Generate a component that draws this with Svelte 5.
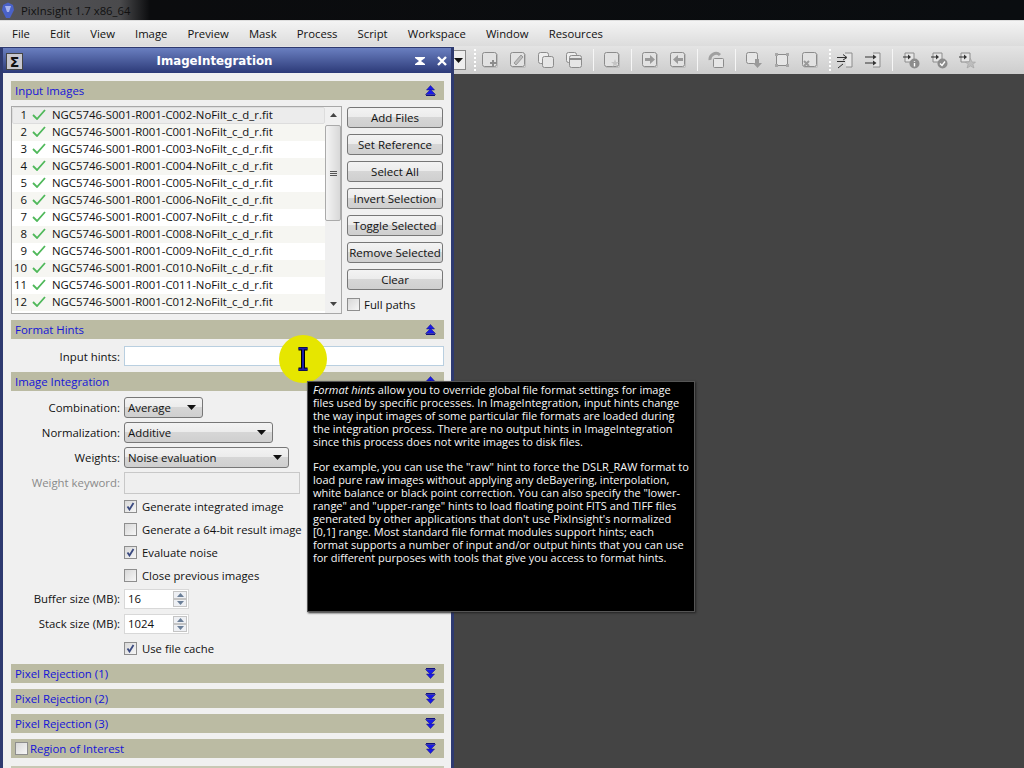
<script>
  const menus = ['File', 'Edit', 'View', 'Image', 'Preview', 'Mask', 'Process', 'Script', 'Workspace', 'Window', 'Resources'];
  const files = ['C002', 'C001', 'C003', 'C004', 'C005', 'C006', 'C007', 'C008', 'C009', 'C010', 'C011', 'C012'];
  const buttons = ['Add Files', 'Set Reference', 'Select All', 'Invert Selection', 'Toggle Selected', 'Remove Selected', 'Clear'];
  const collapsed = ['Pixel Rejection (1)', 'Pixel Rejection (2)', 'Pixel Rejection (3)'];
</script>

{#snippet chevrons(up)}
  <svg class="chev" width="11" height="11" viewBox="0 0 11 11">
    {#if up}
      <path d="M5.5 0.5 L9.5 5 H1.5 Z" fill="#1a1ae8" stroke="#101080" stroke-width=".5" />
      <path d="M5.5 4.5 L10.5 9.5 H0.5 Z" fill="#1a1ae8" stroke="#101080" stroke-width=".5" />
      <path d="M1 10.5 H10" stroke="#101080" />
    {:else}
      <path d="M1 0.5 H10" stroke="#101080" />
      <path d="M0.5 1.5 H10.5 L5.5 6.5 Z" fill="#1a1ae8" stroke="#101080" stroke-width=".5" />
      <path d="M1.5 6 H9.5 L5.5 10.5 Z" fill="#1a1ae8" stroke="#101080" stroke-width=".5" />
    {/if}
  </svg>
{/snippet}

{#snippet check(on)}
  <span class="box">
    {#if on}
      <svg width="9" height="9" viewBox="0 0 9 9"><path d="M1.5 4.5 L3.5 7.5 L7.5 1" fill="none" stroke="#3a4a80" stroke-width="1.8" /></svg>
    {/if}
  </span>
{/snippet}

{#snippet arrow()}
  <svg width="9" height="5" viewBox="0 0 9 5"><path d="M0 0 H9 L4.5 5 Z" fill="#111" /></svg>
{/snippet}

{#snippet spin(value)}
  <span class="spin">
    <span class="spin-val">{value}</span>
    <span class="spin-btns">
      <span><svg width="7" height="4" viewBox="0 0 7 4"><path d="M3.5 0 L7 4 H0 Z" fill="#6b7f98" /></svg></span>
      <span><svg width="7" height="4" viewBox="0 0 7 4"><path d="M0 0 H7 L3.5 4 Z" fill="#6b7f98" /></svg></span>
    </span>
  </span>
{/snippet}

{#snippet page()}
  <rect x="1.5" y="1.5" width="14" height="14" rx="2" fill="#e2e2e2" stroke="#8c8c8c" />
  <path d="M3 16.5 H15.5 Q16.5 16.5 16.5 15.5 V3" fill="none" stroke="#bdbdbd" />
{/snippet}

<div class="app">
  <header class="titlebar">
    <svg width="14" height="17" viewBox="0 0 14 17">
      <path d="M2 3 L7 0.5 L12 3 L13 8 L9 16 H5 L1 8 Z" fill="#4a62c8" />
      <path d="M4 4 H10 L8 10 H6 Z" fill="#a8b4ec" />
    </svg>
    <span class="apptitle">PixInsight 1.7 x86_64</span>
  </header>

  <nav class="menubar">
    {#each menus as m}
      <span class="menu">{m}</span>
    {/each}
  </nav>

  <div class="toolbar">
    <span class="combo-end">{@render arrow()}</span>
    <i class="sep dotted"></i>
    <svg class="tool" width="18" height="18" viewBox="0 0 18 18">{@render page()}<path d="M12 9 V15 M9 12 H15" stroke="#8c8c8c" stroke-width="2" /></svg>
    <svg class="tool" width="18" height="18" viewBox="0 0 18 18">{@render page()}<path d="M5 12 L12 4 L14 6 L7 14 Z" fill="#bdbdbd" stroke="#9a9a9a" /></svg>
    <svg class="tool" width="18" height="18" viewBox="0 0 18 18"><rect x="1.5" y="1.5" width="10" height="11" rx="2" fill="#eee" stroke="#8c8c8c" /><rect x="5.5" y="5.5" width="11" height="11" rx="2" fill="#e6e6e6" stroke="#8c8c8c" /></svg>
    <svg class="tool" width="18" height="18" viewBox="0 0 18 18"><rect x="1.5" y="1.5" width="10" height="10" rx="2" fill="#eee" stroke="#8c8c8c" /><rect x="4.5" y="4.5" width="12" height="12" rx="2" fill="#e6e6e6" stroke="#8c8c8c" /><path d="M5 8 H16" stroke="#8c8c8c" stroke-width="2" /></svg>
    <i class="sep"></i>
    <svg class="tool" width="18" height="18" viewBox="0 0 18 18">{@render page()}<path d="M12 8 L13 11 H16 L13.5 13 L14.5 16 L12 14 L9.5 16 L10.5 13 L8 11 H11 Z" fill="#c4c4c4" /></svg>
    <i class="sep"></i>
    <svg class="tool" width="18" height="18" viewBox="0 0 18 18">{@render page()}<path d="M4 7 H9 V4 L14 8.5 L9 13 V10 H4 Z" fill="#9a9a9a" /></svg>
    <svg class="tool" width="18" height="18" viewBox="0 0 18 18">{@render page()}<path d="M14 7 H9 V4 L4 8.5 L9 13 V10 H14 Z" fill="#9a9a9a" /></svg>
    <i class="sep"></i>
    <svg class="tool" width="18" height="18" viewBox="0 0 18 18"><path d="M3 9 A6 6 0 0 1 13 4" fill="none" stroke="#a0a0a0" stroke-width="3" /><rect x="6.5" y="7.5" width="10" height="9" rx="1" fill="#e6e6e6" stroke="#8c8c8c" /></svg>
    <i class="sep"></i>
    <svg class="tool" width="18" height="18" viewBox="0 0 18 18"><rect x="1.5" y="1.5" width="11" height="11" rx="2" fill="#e6e6e6" stroke="#8c8c8c" /><path d="M10 8 H14 V12 H17 L12.5 17 L8 12 H10 Z" fill="#9a9a9a" /></svg>
    <svg class="tool" width="18" height="18" viewBox="0 0 18 18"><rect x="3.5" y="3.5" width="11" height="11" fill="#e6e6e6" stroke="#8c8c8c" /><path d="M2 2 H5 V5 H2 Z M13 2 H16 V5 H13 Z M2 13 H5 V16 H2 Z M13 13 H16 V16 H13 Z" fill="#a8a8a8" /></svg>
    <svg class="tool" width="18" height="18" viewBox="0 0 18 18">{@render page()}<path d="M3 10 L8 15 M8 10 L3 15" stroke="#9a9a9a" stroke-width="2" /></svg>
    <i class="sep dotted"></i>
    <svg class="tool" width="18" height="18" viewBox="0 0 18 18"><path d="M9 2 H16 V16 H10" fill="#e6e6e6" stroke="#8c8c8c" /><path d="M1 6.5 H10 M1 10.5 H9 M7 3.5 L11 6.5 L7 9 M7 13 L2 17" fill="none" stroke="#333" /></svg>
    <svg class="tool" width="18" height="18" viewBox="0 0 18 18"><path d="M9 2 H16 V16 H9" fill="#e6e6e6" stroke="#8c8c8c" /><path d="M1 6 H10 M1 12 H10" stroke="#333" /><path d="M9 3.5 L12.5 6 L9 8.5 Z M9 9.5 L12.5 12 L9 14.5 Z" fill="#333" /></svg>
    <i class="sep"></i>
    <svg class="tool" width="18" height="18" viewBox="0 0 18 18"><path d="M3 2 H12 V11 H3 Z" fill="#e6e6e6" stroke="#8c8c8c" /><path d="M1 6 H7" stroke="#333" /><path d="M6 3.5 L9 6 L6 8.5 Z" fill="#333" /><circle cx="12.5" cy="12.5" r="5" fill="#8c8c8c" /><path d="M12.5 10 V10.8 M12.5 12 V15.5" stroke="#fff" stroke-width="1.4" /></svg>
    <svg class="tool" width="18" height="18" viewBox="0 0 18 18"><path d="M3 2 H12 V11 H3 Z" fill="#e6e6e6" stroke="#8c8c8c" /><path d="M1 6 H7" stroke="#333" /><path d="M6 3.5 L9 6 L6 8.5 Z" fill="#333" /><circle cx="12.5" cy="12.5" r="5" fill="#8c8c8c" /><path d="M10 12.5 L12 14.5 L15 10.5" fill="none" stroke="#fff" stroke-width="1.4" /></svg>
    <svg class="tool" width="18" height="18" viewBox="0 0 18 18"><path d="M3 2 H12 V11 H3 Z" fill="#e6e6e6" stroke="#8c8c8c" /><path d="M1 6 H7" stroke="#333" /><path d="M6 3.5 L9 6 L6 8.5 Z" fill="#333" /><path d="M12.5 7.5 L14 11 H17.5 L15 13.5 L16 17 L12.5 15 L9 17 L10 13.5 L7.5 11 H11 Z" fill="#bdbdbd" stroke="#999" stroke-width=".5" /></svg>
  </div>

  <main class="workspace"></main>

  <section class="window">
    <div class="win-title">
      <span class="sigma">Σ</span>
      <span class="win-name">ImageIntegration</span>
      <svg class="win-shade" width="10" height="8" viewBox="0 0 10 8"><path d="M0 0 H10 V1 L6 4 L10 7 V8 H0 V7 L4 4 L0 1 Z" fill="#fff" /></svg>
      <svg class="win-close" width="10" height="10" viewBox="0 0 10 10"><path d="M1 1 L9 9 M9 1 L1 9" stroke="#fff" stroke-width="2.4" /></svg>
    </div>

    <div class="win-body">
      <div class="band"><span>Input Images</span>{@render chevrons(true)}</div>
      <div class="input-images">
        <div class="listbox">
          <div class="rows">
            {#each files as f, i}
              <div class="row" class:alt={i % 2 === 1} class:current={i === 0}>
                <span class="num">{i + 1}</span>
                <svg class="tick" width="14" height="11" viewBox="0 0 14 11"><path d="M1 6 L5 10 L13 1" fill="none" stroke="#4fb85a" stroke-width="1.8" /></svg>
                <span>NGC5746-S001-R001-{f}-NoFilt_c_d_r.fit</span>
              </div>
            {/each}
          </div>
          <div class="scrollbar">
            <svg class="sb-up" width="7" height="4" viewBox="0 0 7 4"><path d="M3.5 0 L7 4 H0 Z" fill="#444" /></svg>
            <div class="thumb"><i></i><i></i><i></i></div>
            <svg class="sb-down" width="7" height="4" viewBox="0 0 7 4"><path d="M0 0 H7 L3.5 4 Z" fill="#444" /></svg>
          </div>
        </div>
        <div class="side">
          {#each buttons as b}
            <div class="btn">{b}</div>
          {/each}
          <label class="full">{@render check(false)}<span>Full paths</span></label>
        </div>
      </div>

      <div class="band"><span>Format Hints</span>{@render chevrons(true)}</div>
      <div class="hints">
        <span class="lbl">Input hints:</span>
        <div class="field wide"></div>
      </div>

      <div class="band"><span>Image Integration</span>{@render chevrons(true)}</div>
      <div class="form">
        <div class="frow first"><span class="lbl">Combination:</span><div class="select s-comb">Average{@render arrow()}</div></div>
        <div class="frow"><span class="lbl">Normalization:</span><div class="select s-norm">Additive{@render arrow()}</div></div>
        <div class="frow"><span class="lbl">Weights:</span><div class="select s-weight">Noise evaluation{@render arrow()}</div></div>
        <div class="frow"><span class="lbl dim">Weight keyword:</span><div class="field s-key"></div></div>
        <div class="frow after-key"><span class="lbl"></span>{@render check(true)}<span class="ck">Generate integrated image</span></div>
        <div class="frow tight"><span class="lbl"></span>{@render check(false)}<span class="ck">Generate a 64-bit result image</span></div>
        <div class="frow tight"><span class="lbl"></span>{@render check(true)}<span class="ck">Evaluate noise</span></div>
        <div class="frow tight"><span class="lbl"></span>{@render check(false)}<span class="ck">Close previous images</span></div>
        <div class="frow tight"><span class="lbl">Buffer size (MB):</span>{@render spin('16')}</div>
        <div class="frow"><span class="lbl">Stack size (MB):</span>{@render spin('1024')}</div>
        <div class="frow"><span class="lbl"></span>{@render check(true)}<span class="ck">Use file cache</span></div>
      </div>

      {#each collapsed as c}
        <div class="band closed"><span>{c}</span>{@render chevrons(false)}</div>
      {/each}
      <div class="band closed"><span class="roi">{@render check(false)}Region of Interest</span>{@render chevrons(false)}</div>
      <div class="band last"></div>
    </div>
  </section>

  <div class="spot">
    <svg width="12" height="24" viewBox="0 0 12 24">
      <path d="M1.5 1.5 H10.5 M1.5 22.5 H10.5 M6 1.5 V22.5" fill="none" stroke="#000" stroke-width="4" />
      <path d="M1.5 1.5 H10.5 M1.5 22.5 H10.5 M6 1.5 V22.5" fill="none" stroke="#1c1ca8" stroke-width="2" />
    </svg>
  </div>

  <aside class="tip">
    <p><em>Format hints</em> allow you to override global file format settings for image<br />files used by specific processes. In ImageIntegration, input hints change<br />the way input images of some particular file formats are loaded during<br />the integration process. There are no output hints in ImageIntegration<br />since this process does not write images to disk files.</p>
    <p>For example, you can use the "raw" hint to force the DSLR_RAW format to<br />load pure raw images without applying any deBayering, interpolation,<br />white balance or black point correction. You can also specify the "lower-<br />range" and "upper-range" hints to load floating point FITS and TIFF files<br />generated by other applications that don't use PixInsight's normalized<br />[0,1] range. Most standard file format modules support hints; each<br />format supports a number of input and/or output hints that you can use<br />for different purposes with tools that give you access to format hints.</p>
  </aside>
</div>

<style>
  :global(body) {
    background: #444;
  }

  .app {
    position: relative;
    width: 1024px;
    height: 768px;
    overflow: hidden;
    display: flex;
    flex-direction: column;
    font-family: 'Open Sans', 'Noto Sans', sans-serif;
    font-size: 11.4px;
    color: #111;
    background: #444;
  }

  .titlebar {
    height: 20px;
    flex: none;
    display: flex;
    align-items: center;
    gap: 6px;
    padding-left: 1px;
    background: linear-gradient(90deg, #55555a 0, #4a4a4c 120px, #0b0c0e 150px, #0a0d10 100%);
    border-bottom: 1px solid #ddd;
  }

  .apptitle {
    color: #111;
    font-size: 11.3px;
  }

  .menubar {
    height: 25px;
    flex: none;
    display: flex;
    align-items: center;
    padding-left: 2px;
    background: linear-gradient(#f4f4f4, #dcdcdc);
    font-size: 11.3px;
  }

  .menu {
    padding: 0 10.05px;
  }

  .toolbar {
    height: 28px;
    flex: none;
    display: flex;
    align-items: center;
    gap: 10px;
    padding-left: 454px;
    background: linear-gradient(#e4e4e4, #cdcdcd);
  }

  .combo-end {
    width: 12px;
    height: 20px;
    display: flex;
    align-items: center;
    border: 1px solid #888;
    border-left: 0;
    background: #eee;
    box-sizing: border-box;
    margin-right: -2px;
  }

  .sep {
    width: 1px;
    height: 22px;
    margin-right: -1px;
    background: #f6f6f6;
  }

  .sep.dotted {
    background: repeating-linear-gradient(#fff 0 2px, transparent 2px 4px);
    width: 2px;
    margin-right: -5px;
  }

  .tool {
    flex: none;
  }

  .workspace {
    flex: 1;
    background: #444;
  }

  .window {
    position: absolute;
    left: 0;
    top: 47px;
    width: 454px;
    height: 721px;
    box-sizing: border-box;
    border: 1px solid #2e3a70;
    border-width: 1px 3px 0;
    overflow: hidden;
    background: #f0f0f0;
  }

  .win-title {
    height: 25px;
    display: flex;
    align-items: center;
    position: relative;
    background: linear-gradient(#6a7fc0, #2c3a78);
  }

  .sigma {
    position: absolute;
    left: 3px;
    top: 5px;
    width: 17px;
    height: 17px;
    display: flex;
    align-items: center;
    justify-content: center;
    background: #c8c8d0;
    border: 1px solid #444;
    box-sizing: border-box;
    font: bold 14px 'DejaVu Sans', sans-serif;
    color: #111;
  }

  .win-name {
    flex: 1;
    text-align: center;
    color: #fff;
    font: bold 11.8px 'DejaVu Sans', sans-serif;
    padding-left: 11px;
  }

  .win-shade {
    margin-right: 12px;
  }

  .win-close {
    margin-right: 4px;
  }

  .win-body {
    padding: 8px 7px 0 8px;
  }

  .band {
    height: 19px;
    display: flex;
    align-items: center;
    justify-content: space-between;
    padding: 0 8px 0 4px;
    background: #bbbba3;
    color: #1414d8;
    font-size: 11.4px;
  }

  .band.closed {
    margin-bottom: 6px;
  }

  .band.last {
    margin-top: 8px;
    background: #c8c8b4;
  }

  .roi {
    display: flex;
    align-items: center;
    gap: 2px;
  }

  .input-images {
    display: flex;
    gap: 5px;
    margin: 6px 1px 6px 0;
  }

  .listbox {
    width: 331px;
    height: 208px;
    flex: none;
    box-sizing: border-box;
    display: flex;
    border: 1px solid #a8a8a8;
    background: #fff;
  }

  .rows {
    flex: 1;
    min-width: 0;
  }

  .row {
    height: 17px;
    box-sizing: border-box;
    padding-bottom: 2px;
    display: flex;
    align-items: center;
    white-space: nowrap;
  }

  .row.alt {
    background: #f6f6f2;
  }

  .row.current {
    background: #ececec;
    border-radius: 2px;
    box-shadow: inset 0 0 0 1px #ddd;
  }

  .num {
    width: 15px;
    text-align: right;
    margin-right: 5px;
  }

  .tick {
    margin-right: 6px;
  }

  .scrollbar {
    width: 16px;
    flex: none;
    display: flex;
    flex-direction: column;
    align-items: center;
    background: #f0f0f0;
    position: relative;
  }

  .sb-up {
    margin: 6px 0 8px;
  }

  .thumb {
    width: 100%;
    height: 96px;
    box-sizing: border-box;
    display: flex;
    flex-direction: column;
    align-items: center;
    justify-content: center;
    gap: 1px;
    border: 1px solid #aaa;
    border-radius: 2px;
    background: linear-gradient(90deg, #f4f4f4, #d8d8d8);
  }

  .thumb i {
    width: 7px;
    height: 1px;
    background: #555;
  }

  .sb-down {
    margin-top: auto;
    margin-bottom: 7px;
  }

  .side {
    flex: 1;
    display: flex;
    flex-direction: column;
    gap: 6px;
    padding-top: 1px;
  }

  .btn {
    height: 21px;
    box-sizing: border-box;
    padding-bottom: 1px;
    display: flex;
    align-items: center;
    justify-content: center;
    border: 1px solid #777;
    border-radius: 3px;
    background: linear-gradient(#f3f3f3 0, #ececec 45%, #d6d6d6 50%, #cfcfcf 100%);
    font-size: 11.5px;
    white-space: nowrap;
  }

  .full {
    display: flex;
    align-items: center;
    gap: 4px;
    margin: 1px 0 0;
  }

  .box {
    width: 13px;
    height: 13px;
    flex: none;
    box-sizing: border-box;
    display: flex;
    align-items: center;
    justify-content: center;
    border: 1px solid #8e8e8e;
    background: linear-gradient(135deg, #d8d8d8, #f6f6f6);
  }

  .hints {
    display: flex;
    align-items: center;
    height: 20px;
    margin: 7px 0 6px;
  }

  .lbl {
    width: 109px;
    flex: none;
    text-align: right;
    margin-right: 4px;
    white-space: nowrap;
  }

  .dim {
    color: #8a8a8a;
  }

  .field {
    box-sizing: border-box;
    height: 20px;
    border: 1px solid #b9cfe0;
    background: #fff;
  }

  .field.wide {
    flex: 1;
  }

  .s-key {
    width: 176px;
    height: 22px;
    border-color: #c8c8c8;
    background: #efefef;
  }

  .form {
    padding-bottom: 5px;
  }

  .frow {
    height: 21px;
    margin-top: 4px;
    display: flex;
    align-items: center;
  }

  .frow.first {
    margin-top: 6px;
  }

  .frow.after-key {
    margin-top: 3px;
  }

  .frow.tight {
    margin-top: 2px;
  }

  .select {
    height: 21px;
    box-sizing: border-box;
    display: flex;
    align-items: center;
    justify-content: space-between;
    padding: 0 6px 0 3px;
    border: 1px solid #777;
    border-radius: 3px;
    background: linear-gradient(#f3f3f3 0, #ececec 45%, #d6d6d6 50%, #cfcfcf 100%);
  }

  .s-comb {
    width: 79px;
  }

  .s-norm {
    width: 149px;
  }

  .s-weight {
    width: 165px;
  }

  .ck {
    margin-left: 5px;
    font-size: 11.3px;
    white-space: nowrap;
  }

  .spin {
    width: 65px;
    height: 20px;
    box-sizing: border-box;
    display: flex;
    align-items: center;
    justify-content: space-between;
    border: 1px solid #d8d8d8;
    background: #fff;
    padding-left: 3px;
  }

  .spin-btns {
    width: 14px;
    height: 16px;
    margin-right: 1px;
    display: flex;
    flex-direction: column;
    gap: 0;
  }

  .spin-btns span {
    flex: 1;
    display: flex;
    align-items: center;
    justify-content: center;
    border: 1px solid #c4c4c4;
    background: #eef0f4;
  }

  .spot {
    position: absolute;
    left: 279px;
    top: 335px;
    width: 48px;
    height: 48px;
    border-radius: 50%;
    background: #e6e600;
    display: flex;
    align-items: center;
    justify-content: center;
  }

  .tip {
    position: absolute;
    left: 307px;
    top: 381px;
    width: 388px;
    height: 231px;
    box-sizing: border-box;
    padding: 2px 4px 0 5px;
    background: #000;
    border: 1px solid #555;
    box-shadow: 1px 1px 2px #222;
    color: #f8f8f8;
    font-size: 11.03px;
    line-height: 12.9px;
    white-space: nowrap;
  }

  .tip p {
    margin: 0 0 12.9px;
  }

  .tip em {
    font-style: italic;
  }
</style>
